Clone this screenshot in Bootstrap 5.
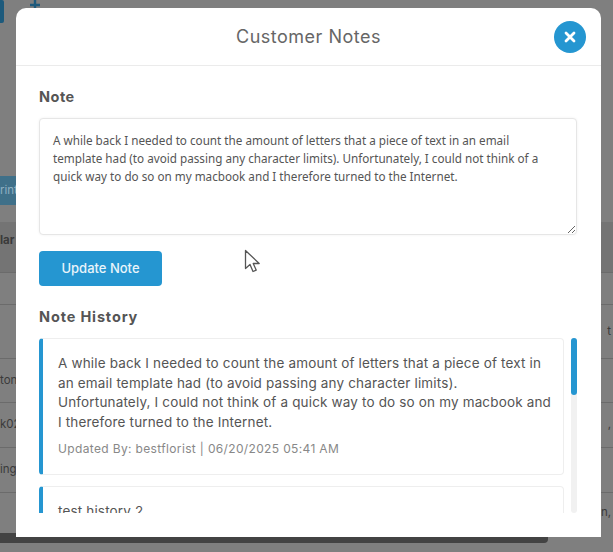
<!DOCTYPE html>
<html>
<head>
  <meta charset="UTF-8">
  <title>Customer Notes</title>
  <link href="https://cdn.jsdelivr.net/npm/bootstrap@5.3.3/dist/css/bootstrap.min.css" rel="stylesheet">
  <style>
    html, body { height: 552px; overflow: hidden; }
    body { background: #7f7f7f; font-family: Inter, "Liberation Sans", sans-serif; color: #555; position: relative; }

    /* page behind the modal */
    .page-bg { height: 552px; color: #3a3a3a; font-size: 11.5px; }
    .page-top { height: 176px; padding-left: 29px; }
    .add-tab { width: 4px; height: 23px; background: #1d5a7c; border-radius: 0 2px 2px 0; position: absolute; left: 0; top: 0; }
    .plus-mark { display: block; }
    .print-btn { width: 100px; height: 29px; background: #3f7089; color: #8fb0c2; line-height: 29px; white-space: nowrap; }
    .gap-band { height: 17px; }
    .bg-row { display: flex; justify-content: space-between; align-items: center; padding: 0 2px 0 0; border-bottom: 1px solid #6b6b6b; overflow: hidden; white-space: nowrap; }
    .bg-head { height: 51px; background: #747474; font-weight: 700; padding-bottom: 12px; }
    .bg-last { border-bottom: 0; }
    .bg-tail { height: 10px; background: #434343; width: 548px; border-radius: 0 0 4px 0; }

    /* modal */
    .notes-modal { position: absolute; left: 16px; top: 8px; width: 585px; height: 529px; background: #fff; border: 0; border-radius: 10px 10px 0 0; overflow: hidden; }
    .notes-header { height: 58px; padding: 0 15px; border-bottom: 1px solid #ebebeb; position: relative; justify-content: center; }
    .notes-title { font-size: 18px; font-weight: 400; color: #666; letter-spacing: .5px; margin: 0; }
    .notes-close { position: absolute; right: 15px; top: 13px; width: 32px; height: 32px; border: 0; border-radius: 50%; background: #2596d1; padding: 0; display: flex; align-items: center; justify-content: center; }
    .notes-body { padding: 22px 24px 0 23px; }
    .notes-label { font-size: 14.5px; font-weight: 700; color: #555; letter-spacing: .5px; margin-bottom: 12px; line-height: 18px; }
    .notes-area { height: 117px; font-family: "Noto Sans", sans-serif; font-size: 11.7px; line-height: 18px; color: #555; padding: 12px 30px 10px 13px; border: 1px solid #e6e6e6; border-radius: 4px; box-shadow: 0 0 3px rgba(0,0,0,.06); }
    .notes-btn { display: block; width: 123px; height: 35px; margin-top: 16px; background: #2596d1; border: 0; border-radius: 4px; color: #e9f4fa; font-size: 13px; font-weight: 500; padding: 0; }
    .history-label { margin-top: 22px; margin-bottom: 12px; letter-spacing: .85px; }
    .history-wrap { height: 175px; }
    .history-scroll { width: 525px; overflow: hidden; }
    .history-bar { width: 6px; height: 175px; background: #f1f1f1; border-radius: 3px; }
    .history-thumb { height: 57px; background: #2596d1; border-radius: 3px; }
    .history-item { border: 1px solid #eee; border-left: 4px solid #2596d1; border-radius: 4px; padding: 15px 8px 16px 15px; margin-bottom: 11px; }
    .history-text { font-size: 13.5px; line-height: 19.6px; color: #555; letter-spacing: .16px; margin: 0 0 8px; }
    .history-meta { font-size: 12px; color: #888; letter-spacing: .35px; line-height: 18px; }

    .mouse-arrow { position: absolute; left: 244px; top: 249px; }
  </style>
</head>
<body>
  <div class="page-bg">
    <div class="add-tab"></div>
    <div class="page-top">
      <svg class="plus-mark" width="12" height="8" viewBox="0 0 12 8"><path d="M6 0v8M1 5h10" stroke="#1d5a7c" stroke-width="2.4"/></svg>
    </div>
    <div class="print-btn">rint</div>
    <div class="gap-band"></div>
    <div class="bg-row bg-head"><span>lar</span></div>
    <div class="bg-row" style="height:32px"></div>
    <div class="bg-row" style="height:54px"><span></span><span>t</span></div>
    <div class="bg-row" style="height:44px"><span>ton</span></div>
    <div class="bg-row" style="height:45px"><span>k02</span><span>,</span></div>
    <div class="bg-row" style="height:45px"><span>ing</span></div>
    <div class="bg-row bg-last" style="height:40px"><span></span><span>n,</span></div>
    <div class="bg-tail"></div>
  </div>

  <div class="modal-content notes-modal">
    <div class="modal-header notes-header">
      <h5 class="notes-title">Customer Notes</h5>
      <button type="button" class="notes-close" aria-label="Close">
        <svg width="12" height="12" viewBox="0 0 12 12"><path d="M2 2l8 8M10 2l-8 8" stroke="#fff" stroke-width="2.8" stroke-linecap="round"/></svg>
      </button>
    </div>
    <div class="modal-body notes-body">
      <div class="notes-label">Note</div>
      <textarea class="form-control notes-area">A while back I needed to count the amount of letters that a piece of text in an email template had (to avoid passing any character limits). Unfortunately, I could not think of a quick way to do so on my macbook and I therefore turned to the Internet.</textarea>
      <button type="button" class="btn notes-btn">Update Note</button>
      <div class="notes-label history-label">Note History</div>
      <div class="history-wrap d-flex justify-content-between">
        <div class="history-scroll">
          <div class="history-item">
            <p class="history-text">A while back I needed to count the amount of letters that a piece of text in an email template had (to avoid passing any character limits).<br>Unfortunately, I could not think of a quick way to do so on my macbook and I therefore turned to the Internet.</p>
            <div class="history-meta">Updated By: bestflorist | 06/20/2025 05:41 AM</div>
          </div>
          <div class="history-item">
            <p class="history-text">test history 2</p>
          </div>
        </div>
        <div class="history-bar"><div class="history-thumb"></div></div>
      </div>
    </div>
  </div>

  <svg class="mouse-arrow" width="17" height="25" viewBox="0 0 17 25"><path d="M1.5 1.5v18l4.5-4 3 7 3.2-1.4-3-6.6h6z" fill="#fff" stroke="#555" stroke-width="1.3" stroke-linejoin="round"/></svg>
</body>
</html>
